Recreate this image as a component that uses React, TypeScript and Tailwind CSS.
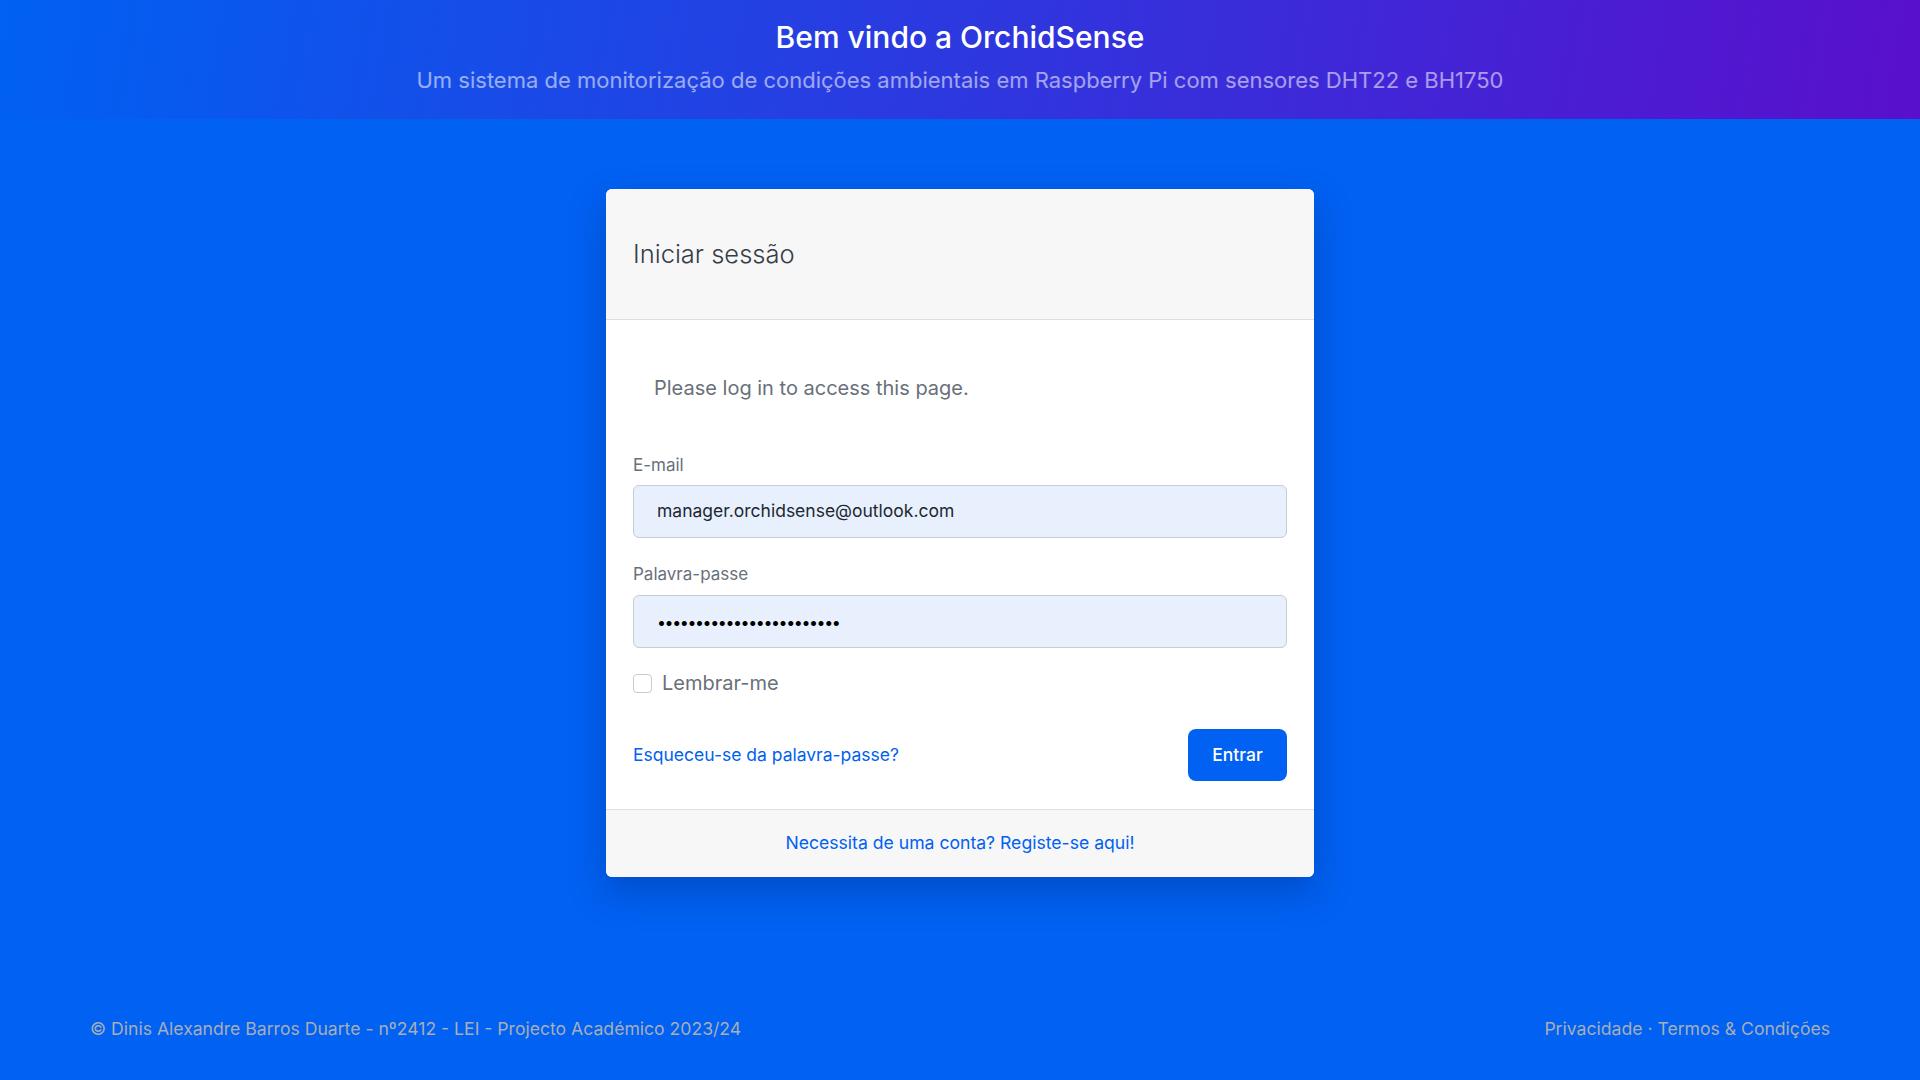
export default function App() {
  return (
    <div className="min-h-screen flex flex-col bg-[#0061f2] font-['Inter',sans-serif]">
      <header className="h-[119px] flex flex-col items-center bg-[linear-gradient(100deg,#0061f2_0%,#5a0fcc_100%)]">
        <h1 className="mt-[19px] text-[30px] leading-[36px] font-medium text-white">Bem vindo a OrchidSense</h1>
        <p className="mt-[11px] text-[22px] leading-[28px] text-white/55">
          Um sistema de monitorização de condições ambientais em Raspberry Pi com sensores DHT22 e BH1750
        </p>
      </header>

      <main className="flex-1 flex justify-center">
        <div className="mt-[70px] w-[708px] h-fit bg-white rounded-[6px] overflow-hidden shadow-[0_15px_35px_rgba(0,40,120,0.35)]">
          <div className="h-[131px] flex items-center px-[27px] bg-[#f7f7f8] border-b border-[#dcdee2]">
            <h2 className="text-[25.5px] font-light text-[#363d47]">Iniciar sessão</h2>
          </div>

          <div className="px-[27px] pt-[55px] pb-[28px]">
            <p className="pl-[21px] text-[20px] leading-[27px] text-[#69707a]">Please log in to access this page.</p>

            <label className="block mt-[51px] text-[17px] leading-[24px] text-[#69707a]">E-mail</label>
            <div className="mt-[8px] h-[53px] flex items-center px-[23px] bg-[#e8f0fe] border border-[#c5ccd6] rounded-[6px] text-[17.5px] text-[#212832]">
              manager.orchidsense@outlook.com
            </div>

            <label className="block mt-[24px] text-[17px] leading-[24px] text-[#69707a]">Palavra-passe</label>
            <div className="mt-[9px] h-[53px] flex items-center px-[23px] bg-[#e8f0fe] border border-[#c5ccd6] rounded-[6px] text-[16px] text-black tracking-[-1.4px]">
              ••••••••••••••••••••••••
            </div>

            <div className="mt-[23px] h-[24px] flex items-center gap-[10px]">
              <span className="w-[19px] h-[19px] rounded-[4px] border border-[#c5ccd6] bg-white" />
              <span className="text-[20px] text-[#69707a]">Lembrar-me</span>
            </div>

            <div className="mt-[34px] flex items-center justify-between">
              <a className="text-[17.5px] text-[#0061f2]">Esqueceu-se da palavra-passe?</a>
              <button className="w-[99px] h-[52px] rounded-[8px] bg-[#0061f2] text-white text-[17.5px] font-medium">Entrar</button>
            </div>
          </div>

          <div className="h-[68px] flex items-center justify-center bg-[#f7f7f8] border-t border-[#dcdee2]">
            <a className="text-[17.6px] text-[#0061f2]">Necessita de uma conta? Registe-se aqui!</a>
          </div>
        </div>
      </main>

      <footer className="h-[102px] flex items-center justify-between px-[90px] text-[17.6px] text-[#a7aeb8]">
        <span>© Dinis Alexandre Barros Duarte - nº2412 - LEI - Projecto Académico 2023/24</span>
        <span>Privacidade · Termos &amp; Condições</span>
      </footer>
    </div>
  )
}
